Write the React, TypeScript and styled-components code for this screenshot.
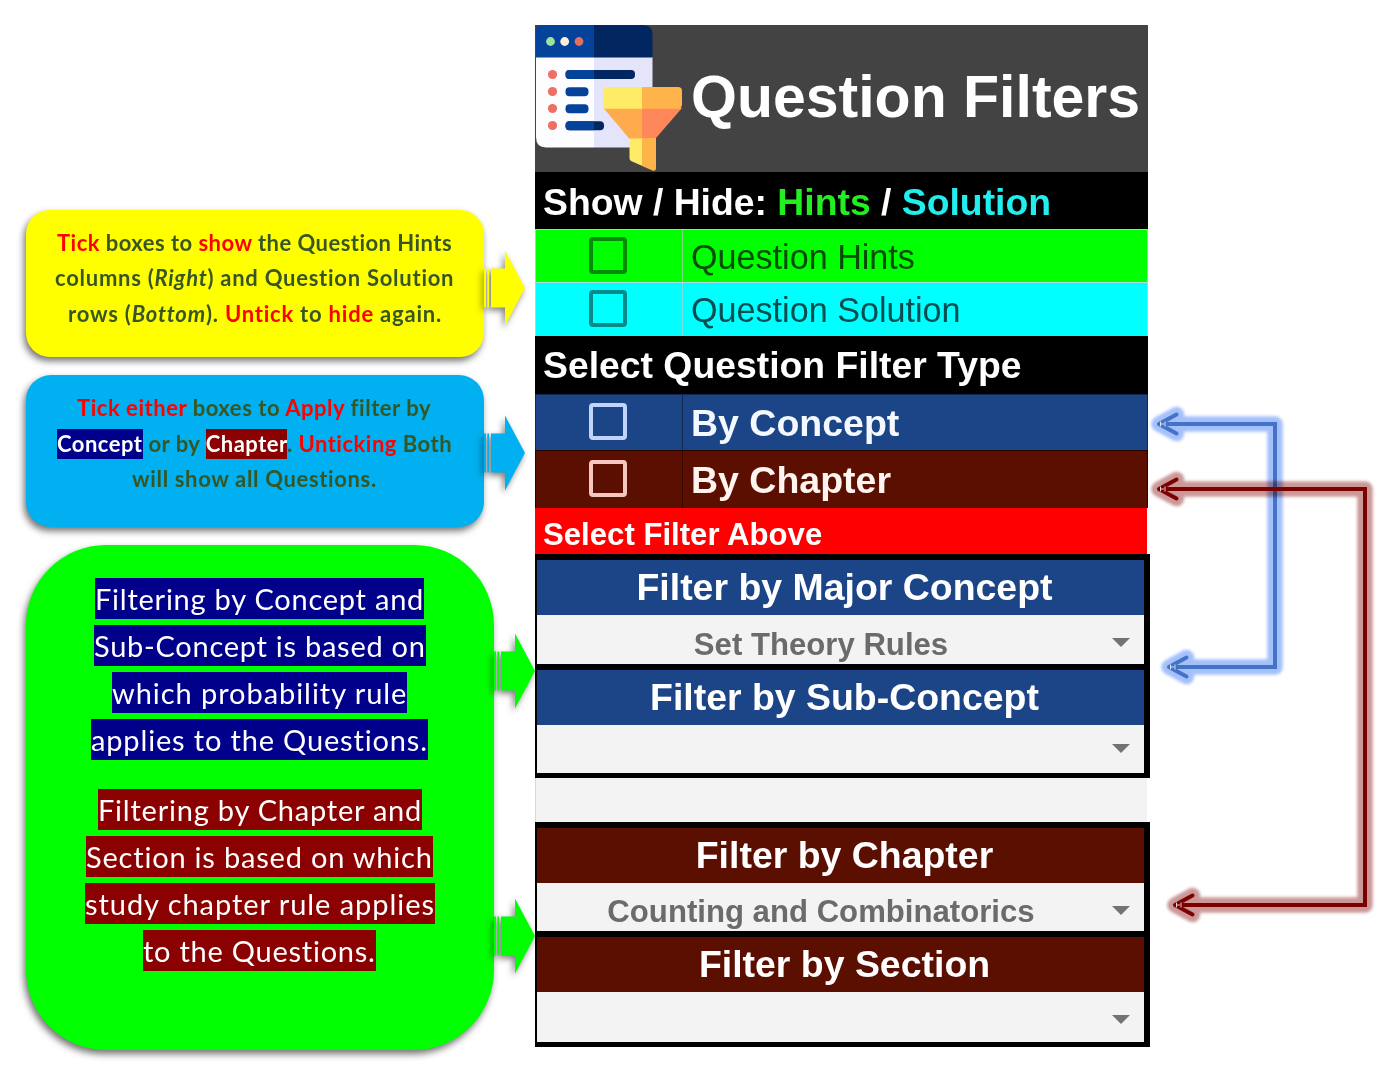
import React from "react";
import styled, { createGlobalStyle } from "styled-components";

const GlobalStyle = createGlobalStyle`
  * { box-sizing: border-box; }
  body { margin: 0; background: #fff; }
`;

const Page = styled.main`
  display: flex;
  width: 1389px;
  height: 1083px;
  overflow: hidden;
  background: #fff;
  font-family: "Liberation Sans", Arial, sans-serif;
`;

/* ---------- explanatory callouts ---------- */

const Notes = styled.aside`
  display: flex;
  flex-direction: column;
  align-items: flex-start;
  gap: 18px;
  width: 535px;
  padding: 210px 0 0 26px;
  font-family: Lato, sans-serif;
  font-variant-ligatures: none;
`;

const Callout = styled.section<{ $bg: string; $w: number; $h: number; $r: number; $pt: number }>`
  position: relative;
  flex: none;
  width: ${(p) => p.$w}px;
  height: ${(p) => p.$h}px;
  padding-top: ${(p) => p.$pt}px;
  border-radius: ${(p) => p.$r}px;
  background: ${(p) => p.$bg};
  box-shadow: -2px 4px 7px rgba(0, 0, 0, 0.55);
`;

const SmallLine = styled.div<{ $ls: number; $dx: number }>`
  padding-left: ${(p) => p.$dx}px;
  font-size: 22px;
  font-weight: 700;
  line-height: 35.5px;
  letter-spacing: ${(p) => p.$ls}px;
  white-space: nowrap;
  color: #375623;
`;

const Red = styled.span`
  color: #f00;
`;

const Tag = styled.span<{ $bg: string }>`
  padding: 1px 0 2px;
  background: ${(p) => p.$bg};
  color: #fff;
`;

const Paragraph = styled.div`
  & + & {
    margin-top: 23px;
  }
`;

const BigLine = styled.div<{ $ls: number; $dx: number }>`
  padding-left: ${(p) => p.$dx}px;
  font-size: 29px;
  line-height: 47px;
  letter-spacing: ${(p) => p.$ls}px;
  white-space: nowrap;
`;

const Mark = styled.span<{ $bg: string }>`
  padding: 3px 0;
  background: ${(p) => p.$bg};
  color: #fff;
`;

const ArrowSvg = styled.svg<{ $top: number }>`
  position: absolute;
  top: ${(p) => p.$top}px;
  left: calc(100% - 1px);
  overflow: visible;
  filter: drop-shadow(-2px 3px 3px rgba(0, 0, 0, 0.5));
`;

function StripedArrow({ color, top }: { color: string; top: number }) {
  return (
    <ArrowSvg $top={top} width="42" height="76" viewBox="0 0 42 76" fill={color}>
      <rect x="1" y="18.5" width="2" height="39" />
      <rect x="4.3" y="18.5" width="1.8" height="39" />
      <path d="M8 18.5H22V0.5L42 38L22 75.5V57.5H8Z" />
    </ArrowSvg>
  );
}

/* ---------- filter panel ---------- */

const Panel = styled.section`
  flex: none;
  display: flex;
  flex-direction: column;
  align-items: flex-start;
  width: 615px;
  padding-top: 25px;
`;

const Header = styled.header`
  display: flex;
  align-items: center;
  width: 613px;
  height: 147px;
  background: #434343;
`;

const Title = styled.h1`
  margin: 0 0 4px 9px;
  font-size: 59px;
  line-height: 68px;
  color: #fff;
  white-space: nowrap;
`;

const Bar = styled.div<{ $h: number; $bg?: string; $size?: number; $shift?: number; $w?: number }>`
  display: flex;
  align-items: center;
  width: ${(p) => p.$w ?? 613}px;
  height: ${(p) => p.$h}px;
  padding: ${(p) => p.$shift ?? 0}px 0 0 8px;
  background: ${(p) => p.$bg ?? "#000"};
  color: #fff;
  font-size: ${(p) => p.$size ?? 37.35}px;
  font-weight: 700;
  white-space: pre;
`;

const Tint = styled.span<{ $c: string }>`
  color: ${(p) => p.$c};
`;

const OptionRow = styled.div<{ $h: number; $bg: string; $line: string }>`
  display: flex;
  width: 613px;
  height: ${(p) => p.$h}px;
  border: 1px solid ${(p) => p.$line};
  border-bottom: 0;
  background: ${(p) => p.$bg};
`;

const BoxCell = styled.div<{ $line: string; $lift?: number }>`
  display: flex;
  align-items: center;
  justify-content: center;
  width: 147px;
  padding: 0 2px ${(p) => p.$lift ?? 1}px 0;
  border-right: 1px solid ${(p) => p.$line};
`;

const CheckBox = styled.span<{ $c: string }>`
  width: 38px;
  height: 37px;
  border: 4px solid ${(p) => p.$c};
  border-radius: 4px;
`;

const OptionText = styled.div<{ $bold?: boolean; $c: string }>`
  display: flex;
  align-items: center;
  padding: ${(p) => (p.$bold ? 1 : 2)}px 0 0 8px;
  font-size: ${(p) => (p.$bold ? 37.5 : 34.15)}px;
  font-weight: ${(p) => (p.$bold ? 700 : 400)};
  color: ${(p) => p.$c};
  white-space: nowrap;
`;

const FilterGroup = styled.div`
  width: 615px;
  border: solid #000;
  border-width: 6px 6px 5px 2px;
`;

const FilterTitle = styled.div<{ $bg: string }>`
  display: flex;
  align-items: center;
  justify-content: center;
  height: 55px;
  padding-left: 8px;
  background: ${(p) => p.$bg};
  color: #fff;
  font-size: 37.45px;
  font-weight: 700;
`;

const Select = styled.div<{ $h: number; $divider?: boolean }>`
  display: flex;
  align-items: center;
  height: ${(p) => p.$h}px;
  padding: 6px 14px 0 0;
  border-bottom: ${(p) => (p.$divider ? "6px solid #000" : "0")};
  background: #f3f3f3;
`;

const SelectText = styled.span`
  flex: 1;
  padding-top: 4px;
  text-indent: -7px;
  text-align: center;
  color: #6b6b6b;
  font-size: 31.15px;
  line-height: 34px;
  font-weight: 700;
`;

const Caret = styled.i<{ $up?: number }>`
  width: 0;
  height: 0;
  margin-bottom: ${(p) => p.$up ?? 0}px;
  border: 9px solid transparent;
  border-top-color: #737373;
  border-bottom: 0;
`;

const Spacer = styled.div`
  width: 612px;
  height: 44px;
  border-left: 1px solid #d8d8d8;
  background: #f3f3f3;
`;

function FilterIcon() {
  return (
    <svg width="147" height="147" viewBox="535 25 147 147">
      <path d="M536 57H594V147.5H546Q536 147.5 536 137Z" fill="#fdfdff" />
      <path d="M594 57H652.5V147.5H594Z" fill="#e4e4fb" />
      <path d="M536 57.5V31Q536 25 541 25H594V57.5Z" fill="#05429a" />
      <path d="M594 25H643Q652.5 25 652.5 35V57.5H594Z" fill="#022760" />
      <circle cx="550.5" cy="41.5" r="4.4" fill="#9be49b" />
      <circle cx="564.7" cy="41.5" r="4.4" fill="#fff0dc" />
      <circle cx="579" cy="41.5" r="4.4" fill="#e2705f" />
      {[74.5, 91.5, 108.5, 125.5].map((y) => (
        <circle key={y} cx="552.5" cy={y} r="4.6" fill="#ee6f63" />
      ))}
      <rect x="565.5" y="70" width="69.5" height="9" rx="4" fill="#022760" />
      <path d="M594 70V79H569.5Q565.5 79 565.5 74.5T569.5 70Z" fill="#05429a" />
      <rect x="565.5" y="87.2" width="23" height="9" rx="4" fill="#05429a" />
      <rect x="565.5" y="104.2" width="23" height="9" rx="4" fill="#05429a" />
      <rect x="565.5" y="121.2" width="38.5" height="9" rx="4" fill="#022760" />
      <path d="M594 121.2V130.2H569.5Q565.5 130.2 565.5 125.7T569.5 121.2Z" fill="#05429a" />
      <path d="M603.5 108L629.5 139H642.5V108Z" fill="#ffab4d" />
      <path d="M682 108L656 138H642V108Z" fill="#ff885a" />
      <path d="M642.5 87H607Q603 87 603 91V104Q603 106.5 604.5 108.7H642.5Z" fill="#ffec66" />
      <path d="M642 87H678Q682 87 682 91V104Q682 106.5 680.5 108.7H642Z" fill="#ffb44b" />
      <path d="M629.5 138.5H642.5V166L631 161Q629.5 160 629.5 158Z" fill="#ffec66" />
      <path d="M642 138H656V168Q656 171.5 652.5 170.5L642 166Z" fill="#ffb44b" />
    </svg>
  );
}

/* ---------- linking arrows on the right ---------- */

const Links = styled.svg`
  flex: none;
  width: 239px;
  height: 1083px;
  overflow: visible;
`;

const Glow = styled.g`
  mix-blend-mode: multiply;
`;

function Head({ x, y }: { x: number; y: number }) {
  return (
    <path
      d={`M${x + 20.5} ${y - 9.5}L${x + 3} ${y}L${x + 20.5} ${y + 9.5}`}
      strokeLinecap="round"
      strokeLinejoin="round"
    />
  );
}

function Link({ x, x1, y1, x2, y2, color, glow }: {
  x: number; x1: number; y1: number; x2: number; y2: number; color: string; glow: string;
}) {
  const shape = (
    <>
      <path d={`M${x1 + 6} ${y1}H${x}V${y2}H${x2 + 6}`} />
      <Head x={x1} y={y1} />
      <Head x={x2} y={y2} />
    </>
  );
  return (
    <g fill="none">
      <Glow stroke={glow} strokeWidth="15.5" strokeLinejoin="round" filter="url(#soft)">{shape}</Glow>
      <g stroke={color} strokeWidth="4">{shape}</g>
      {[[x1, y1], [x2, y2]].map(([hx, hy]) => (
        <path
          key={hy}
          d={`M${hx + 4.5} ${hy - 2.5}V${hy + 2.5}M${hx + 4.5} ${hy}H${hx + 8}M${hx + 9} ${hy - 2.5}V${hy + 2.5}`}
          stroke="#fff"
          strokeWidth="0.8"
        />
      ))}
    </g>
  );
}

const NAVY = "#00008b";
const DARK_RED = "#8b0000";
const BLUE = "#1c4587";
const MAROON = "#5b0f00";

export default function App() {
  return (
    <Page>
      <GlobalStyle />
      <Notes>
        <Callout $bg="#ffff00" $w={458} $h={147} $r={24} $pt={14.6}>
          <SmallLine $dx={31} $ls={0.47}>
            <Red>Tick</Red> boxes to <Red>show</Red> the Question Hints
          </SmallLine>
          <SmallLine $dx={29} $ls={0.74}>
            columns (<em>Right</em>) and Question Solution
          </SmallLine>
          <SmallLine $dx={42} $ls={0.79}>
            rows (<em>Bottom</em>). <Red>Untick</Red> to <Red>hide</Red> again.
          </SmallLine>
          <StripedArrow color="#ffff00" top={40} />
        </Callout>
        <Callout $bg="#00b0f0" $w={458} $h={152} $r={25} $pt={15}>
          <SmallLine $dx={51} $ls={0.54}>
            <Red>Tick either</Red> boxes to <Red>Apply</Red> filter by
          </SmallLine>
          <SmallLine $dx={31} $ls={0.5}>
            <Tag $bg={NAVY}>Concept</Tag> or by <Tag $bg={DARK_RED}>Chapter</Tag>. <Red>Unticking</Red> Both
          </SmallLine>
          <SmallLine $dx={106} $ls={0.65}>will show all Questions.</SmallLine>
          <StripedArrow color="#00b0f0" top={40} />
        </Callout>
        <Callout $bg="#00ff00" $w={468} $h={505} $r={80} $pt={30}>
          <Paragraph>
            <BigLine $dx={69} $ls={0.76}><Mark $bg={NAVY}>Filtering by Concept and</Mark></BigLine>
            <BigLine $dx={68} $ls={0.73}><Mark $bg={NAVY}>Sub-Concept is based on</Mark></BigLine>
            <BigLine $dx={86} $ls={0.94}><Mark $bg={NAVY}>which probability rule</Mark></BigLine>
            <BigLine $dx={65} $ls={0.84}><Mark $bg={NAVY}>applies to the Questions.</Mark></BigLine>
          </Paragraph>
          <Paragraph>
            <BigLine $dx={72} $ls={0.78}><Mark $bg={DARK_RED}>Filtering by Chapter and</Mark></BigLine>
            <BigLine $dx={60} $ls={0.8}><Mark $bg={DARK_RED}>Section is based on which</Mark></BigLine>
            <BigLine $dx={59} $ls={0.94}><Mark $bg={DARK_RED}>study chapter rule applies</Mark></BigLine>
            <BigLine $dx={117} $ls={0.75}><Mark $bg={DARK_RED}>to the Questions.</Mark></BigLine>
          </Paragraph>
          <StripedArrow color="#00ff00" top={88} />
          <StripedArrow color="#00ff00" top={353} />
        </Callout>
      </Notes>

      <Panel>
        <Header>
          <FilterIcon />
          <Title>Question Filters</Title>
        </Header>
        <Bar $h={57} $shift={3}>
          Show / Hide: <Tint $c="#22ee22">Hints</Tint> / <Tint $c="#22eeee">Solution</Tint>
        </Bar>
        <OptionRow $h={53} $bg="#00ff00" $line="#a8d8a8">
          <BoxCell $line="#80d880"><CheckBox $c="#078a07" /></BoxCell>
          <OptionText $c="#054d05">Question Hints</OptionText>
        </OptionRow>
        <OptionRow $h={54} $bg="#00ffff" $line="#a8dcdc">
          <BoxCell $line="#80dcdc" $lift={2}><CheckBox $c="#078a8c" /></BoxCell>
          <OptionText $c="#054d50">Question Solution</OptionText>
        </OptionRow>
        <Bar $h={58}>Select Question Filter Type</Bar>
        <OptionRow $h={56} $bg={BLUE} $line="#10284f">
          <BoxCell $line="#10284f" $lift={2}><CheckBox $c="#c0d4fb" /></BoxCell>
          <OptionText $bold $c="#f4f8ff">By Concept</OptionText>
        </OptionRow>
        <OptionRow $h={58} $bg={MAROON} $line="#260500">
          <BoxCell $line="#360800" $lift={3}><CheckBox $c="#f5c6c0" /></BoxCell>
          <OptionText $bold $c="#fff4f0">By Chapter</OptionText>
        </OptionRow>
        <Bar $h={46} $bg="#ff0000" $size={31.15} $shift={7} $w={612}>Select Filter Above</Bar>
        <FilterGroup>
          <FilterTitle $bg={BLUE}>Filter by Major Concept</FilterTitle>
          <Select $h={55} $divider>
            <SelectText>Set Theory Rules</SelectText>
            <Caret />
          </Select>
          <FilterTitle $bg={BLUE}>Filter by Sub-Concept</FilterTitle>
          <Select $h={48}>
            <SelectText />
            <Caret $up={7} />
          </Select>
        </FilterGroup>
        <Spacer />
        <FilterGroup>
          <FilterTitle $bg={MAROON}>Filter by Chapter</FilterTitle>
          <Select $h={54} $divider>
            <SelectText>Counting and Combinatorics</SelectText>
            <Caret />
          </Select>
          <FilterTitle $bg={MAROON}>Filter by Section</FilterTitle>
          <Select $h={50}>
            <SelectText />
            <Caret $up={2} />
          </Select>
        </FilterGroup>
      </Panel>

      <Links viewBox="1150 0 239 1083">
        <defs>
          <filter id="soft" x="1140" y="390" width="249" height="550" filterUnits="userSpaceOnUse">
            <feGaussianBlur stdDeviation="1.8" />
          </filter>
        </defs>
        <Link x={1275} x1={1156} y1={424} x2={1166} y2={667} color="#4472c4" glow="#a4c0fb" />
        <Link x={1365} x1={1156} y1={489} x2={1172} y2={905} color="#7b0000" glow="#cc9797" />
      </Links>
    </Page>
  );
}
